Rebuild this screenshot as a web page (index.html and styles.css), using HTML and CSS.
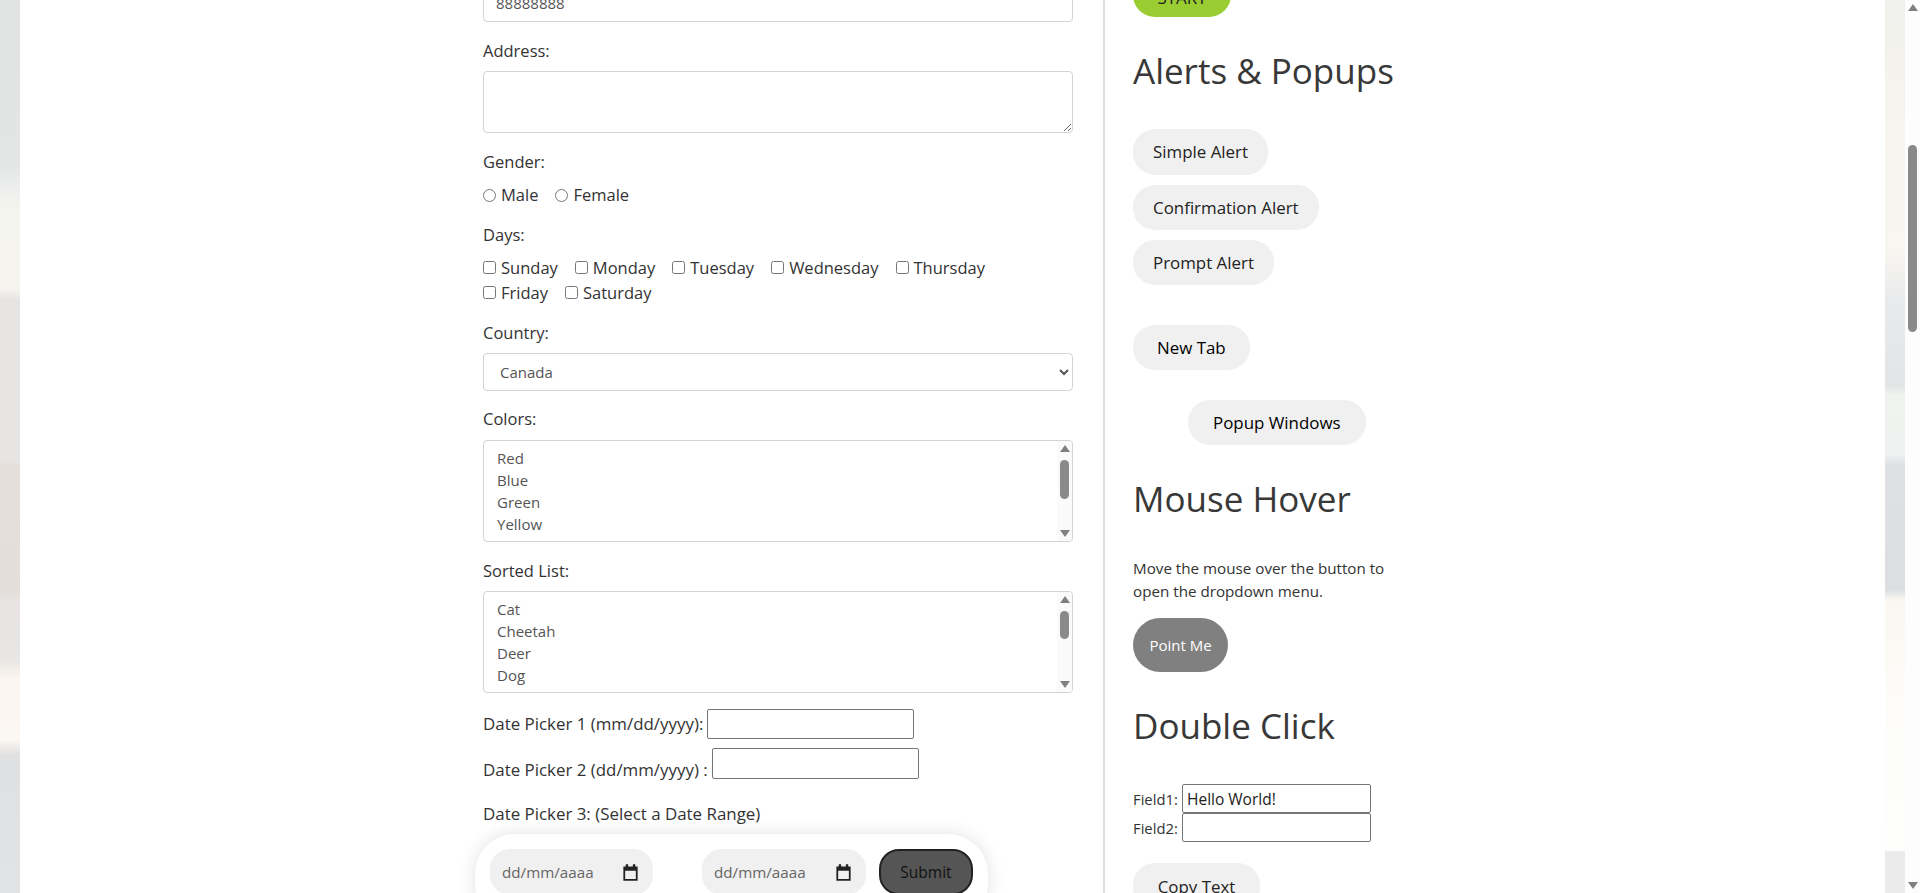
FILE: index.html
```html
<!DOCTYPE html>
<html lang="en">
<head>
    <meta charset="UTF-8">
    <title>Automation Testing Practice</title>
    <link rel="stylesheet" href="styles.css">
</head>
<body>
    <div class="window">
        <div class="page">
            <div class="content">
                <form class="form-col">
                    <input class="control phone" type="text" value="88888888">

                    <div class="field address-field">
                        <label class="field-label">Address:</label>
                        <textarea class="control address"></textarea>
                    </div>

                    <div class="field gender-field">
                        <label class="field-label gender-label">Gender:</label>
                        <div class="choices radios">
                            <label class="choice"><input type="radio" name="gender">Male</label>
                            <label class="choice"><input type="radio" name="gender">Female</label>
                        </div>
                    </div>

                    <div class="field">
                        <label class="field-label">Days:</label>
                        <div class="choices">
                            <label class="choice"><input type="checkbox">Sunday</label>
                            <label class="choice"><input type="checkbox">Monday</label>
                            <label class="choice"><input type="checkbox">Tuesday</label>
                            <label class="choice"><input type="checkbox">Wednesday</label>
                            <label class="choice"><input type="checkbox">Thursday</label>
                            <span class="choice-break"></span>
                            <label class="choice"><input type="checkbox">Friday</label>
                            <label class="choice"><input type="checkbox">Saturday</label>
                        </div>
                    </div>

                    <div class="field">
                        <label class="field-label">Country:</label>
                        <select class="control country">
                            <option>Canada</option>
                        </select>
                    </div>

                    <div class="field">
                        <label class="field-label colors-label">Colors:</label>
                        <div class="listbox">
                            <ul class="list-items">
                                <li>Red</li>
                                <li>Blue</li>
                                <li>Green</li>
                                <li>Yellow</li>
                                <li>Red</li>
                            </ul>
                            <div class="bar list-bar">
                                <span class="arrow-up"></span>
                                <span class="thumb colors-thumb"></span>
                                <span class="arrow-down"></span>
                            </div>
                        </div>
                    </div>

                    <div class="field sorted">
                        <label class="field-label">Sorted List:</label>
                        <div class="listbox">
                            <ul class="list-items">
                                <li>Cat</li>
                                <li>Cheetah</li>
                                <li>Deer</li>
                                <li>Dog</li>
                                <li>Elephant</li>
                            </ul>
                            <div class="bar list-bar">
                                <span class="arrow-up"></span>
                                <span class="thumb sorted-thumb"></span>
                                <span class="arrow-down"></span>
                            </div>
                        </div>
                    </div>

                    <div class="date-row first">
                        <label>Date Picker 1 (mm/dd/yyyy):</label>
                        <input class="plain-input" type="text">
                    </div>
                    <div class="date-row second">
                        <label>Date Picker 2 (dd/mm/yyyy) :</label>
                        <input class="plain-input" type="text">
                    </div>

                    <div class="field range-field">
                        <label class="field-label">Date Picker 3: (Select a Date Range)</label>
                        <div class="range-pill">
                            <div class="date-pick">
                                <span>dd/mm/aaaa</span>
                                <svg class="cal" viewBox="0 0 16 16"><path d="M4 1h2v2h4V1h2v2h2v12H2V3h2zM3.5 6.5v7h9v-7z" fill-rule="evenodd"/></svg>
                            </div>
                            <div class="date-pick second-pick">
                                <span>dd/mm/aaaa</span>
                                <svg class="cal" viewBox="0 0 16 16"><path d="M4 1h2v2h4V1h2v2h2v12H2V3h2zM3.5 6.5v7h9v-7z" fill-rule="evenodd"/></svg>
                            </div>
                            <button class="submit-btn" type="button">Submit</button>
                        </div>
                    </div>
                </form>

                <aside class="side-col">
                    <button class="pill start-btn" type="button">START</button>

                    <h2>Alerts &amp; Popups</h2>
                    <div class="alert-buttons">
                        <button class="pill first-alert" type="button">Simple Alert</button>
                        <button class="pill" type="button">Confirmation Alert</button>
                        <button class="pill" type="button">Prompt Alert</button>
                    </div>
                    <button class="pill wide new-tab" type="button">New Tab</button>
                    <button class="pill wide popup-btn" type="button">Popup Windows</button>

                    <h2 class="hover-title">Mouse Hover</h2>
                    <p class="hover-text">Move the mouse over the button to open the dropdown menu.</p>
                    <button class="point-btn" type="button">Point Me</button>

                    <h2 class="dbl-title">Double Click</h2>
                    <div class="dbl-row dbl-first"><label>Field1:</label><input class="plain-input dbl-input" type="text" value="Hello World!"></div>
                    <div class="dbl-row"><label>Field2:</label><input class="plain-input dbl-input" type="text"></div>
                    <button class="pill copy-btn" type="button">Copy Text</button>
                </aside>
            </div>
        </div>
        <div class="bar page-bar">
            <span class="arrow-up"></span>
            <span class="thumb page-thumb"></span>
            <span class="arrow-down"></span>
        </div>
    </div>
</body>
</html>
```

FILE: styles.css
```css
* {
    box-sizing: border-box;
}

html, body {
    margin: 0;
    height: 100%;
    overflow: hidden;
}

body {
    font-family: "Open Sans", "Noto Sans", sans-serif;
    font-size: 16.5px;
    line-height: 24px;
    color: #333;
}

.window {
    display: flex;
    height: 893px;
}

/* blurred photo behind the page only shows as two thin strips */
.page {
    flex: 1;
    padding: 0 20px;
    overflow: hidden;
    background:
        linear-gradient(#e2e3e3 0, #e3e4e4 165px, #e9ebec 180px, #f4f4ef 205px, #f5f3ee 290px, #e6e5e4 300px, #e6e5e4 460px, #e5dfd9 465px, #e4ded8 590px, #e6e3e2 600px, #e8e6e4 660px, #fbf6ef 680px, #fbf7f1 740px, #dfe0e1 755px, #e2e3e4 893px) left top / 20px 100% no-repeat,
        linear-gradient(#f0f0ec 0, #f3f2ed 60px, #f8f5ef 140px, #f8f6f0 250px, #e9eaec 300px, #e2e4e6 385px, #f1f3f0 395px, #eef1ef 455px, #dee1e4 465px, #dcdee2 590px, #faf7f0 600px, #fdfcf9 700px, #fefefc 850px, #ebebeb 852px) right top / 20px 100% no-repeat,
        #fff;
}

.content {
    display: flex;
    padding-left: 463px;
}

.form-col {
    width: 622px;
    padding-right: 30px;
    border-right: 2px solid #ddd;
    height: 893px;
}

.side-col {
    width: 300px;
    padding-left: 28px;
}

/* form fields */
.control {
    display: block;
    width: 100%;
    border: 1px solid #ced4da;
    border-radius: 4px;
    background: #fff;
    font-family: inherit;
    font-size: 15px;
    color: #555;
}

.phone {
    height: 38px;
    margin-top: -16px;
    padding: 0 12px;
}

.address {
    height: 62px;
}

.field {
    margin-top: 16px;
}

.address-field,
.gender-field {
    margin-top: 17px;
}

.field-label {
    display: block;
    margin-bottom: 8px;
}

.gender-label,
.colors-label {
    margin-bottom: 9px;
}

.choices {
    display: flex;
    flex-wrap: wrap;
    column-gap: 17px;
    line-height: 25px;
}

.radios {
    line-height: 24px;
}

.choice {
    display: flex;
    align-items: center;
}

.choice input {
    width: 13px;
    height: 13px;
    margin: 0 5px 0 0;
}

.choice-break {
    flex-basis: 100%;
}

.country {
    height: 38px;
    padding: 0 12px;
}

.listbox {
    display: flex;
    height: 102px;
    border: 1px solid #ced4da;
    border-radius: 4px;
    overflow: hidden;
}

.list-items {
    flex: 1;
    margin: 0;
    padding: 6px 13px 0;
    list-style: none;
    font-size: 15px;
    line-height: 22px;
    color: #555;
    overflow: hidden;
}

.sorted {
    margin-top: 17px;
}

/* scrollbars are drawn, the window has none of its own */
.bar {
    position: relative;
    flex: none;
    width: 15px;
    background: #fafafa;
}

.page-bar {
    background: #fdfdfd;
}

.arrow-up,
.arrow-down {
    position: absolute;
    left: 2.5px;
    border-left: 5px solid transparent;
    border-right: 5px solid transparent;
}

.arrow-up {
    top: 4px;
    border-bottom: 7px solid #808080;
}

.arrow-down {
    bottom: 4px;
    border-top: 7px solid #808080;
}

.thumb {
    position: absolute;
    left: 3px;
    width: 9px;
    border-radius: 5px;
    background: #8a8a8a;
}

.colors-thumb {
    top: 19px;
    height: 39px;
}

.sorted-thumb {
    top: 19px;
    height: 28px;
}

.page-thumb {
    top: 145px;
    height: 187px;
}

.date-row {
    display: flex;
    align-items: center;
    font-size: 16.9px;
}

.date-row label {
    margin-right: 4px;
}

.date-row.first {
    margin-top: 16px;
}

.date-row.second {
    align-items: flex-start;
    margin-top: 9px;
}

.date-row.second label {
    margin-top: 10px;
}

.plain-input {
    width: 207px;
    height: 30px;
    padding: 1px 4px;
    border: 1px solid #767676;
    border-radius: 2px;
    background: #fff;
    font-family: inherit;
    font-size: 15.5px;
    color: #222;
}

.date-row.second .plain-input {
    height: 31px;
}

.range-field {
    margin-top: 20px;
    font-size: 16.9px;
}

.range-pill {
    display: flex;
    align-items: flex-start;
    width: 513px;
    height: 90px;
    margin-left: -8px;
    padding: 15px 15px;
    border-radius: 40px;
    background: #fff;
    box-shadow: 0 0 18px rgba(0, 0, 0, 0.12);
}

.date-pick {
    display: flex;
    align-items: center;
    justify-content: space-between;
    width: 163px;
    height: 46px;
    padding: 0 13px 0 12px;
    border-radius: 20px;
    background: #f0f0f0;
    font-size: 15.2px;
    color: #666;
}

.second-pick {
    width: 164px;
    margin-left: 49px;
}

.cal {
    width: 19px;
    height: 19px;
    fill: #222;
}

.submit-btn {
    width: 94px;
    height: 46px;
    margin-left: 13px;
    border: 2px solid #222;
    border-radius: 20px;
    background: #555;
    font-family: inherit;
    font-size: 15.5px;
    color: #111;
}

/* right column */
h2 {
    margin: 32px 0 0;
    font-size: 35px;
    font-weight: 400;
    line-height: 43px;
    color: #383838;
}

.pill {
    display: block;
    height: 45px;
    padding: 0 20px;
    border: none;
    border-radius: 22px;
    background: #f0f0f0;
    font-family: inherit;
    font-size: 16.9px;
    color: #222;
}

.start-btn {
    width: 98px;
    height: 46px;
    margin-top: -29px;
    padding: 6px 0 0;
    background: #9acd32;
}

.alert-buttons {
    display: flex;
    flex-direction: column;
    align-items: flex-start;
    gap: 10px;
    margin-top: 37px;
}

.first-alert {
    height: 46px;
    padding-bottom: 2px;
}

.wide {
    padding: 0 24px;
    color: #000;
}

.new-tab {
    margin-top: 40px;
}

.popup-btn {
    margin: 30px 0 0 55px;
    padding: 0 25px;
}

.hover-title {
    margin-top: 32px;
}

.hover-text {
    width: 272px;
    margin: 37px 0 0;
    font-size: 15.2px;
    line-height: 22.5px;
}

.point-btn {
    display: block;
    width: 95px;
    height: 54px;
    margin-top: 16px;
    padding: 0;
    border: none;
    border-radius: 27px;
    background: #808080;
    font-family: inherit;
    font-size: 15px;
    color: #fff;
}

.dbl-title {
    margin-top: 32px;
}

.dbl-row {
    display: flex;
    align-items: center;
    font-size: 14.8px;
}

.dbl-first {
    margin-top: 37px;
}

.dbl-row label {
    width: 49px;
}

.dbl-input {
    width: 189px;
    height: 29px;
}

.copy-btn {
    width: 127px;
    height: 46px;
    margin-top: 21px;
    padding: 0;
}
```
